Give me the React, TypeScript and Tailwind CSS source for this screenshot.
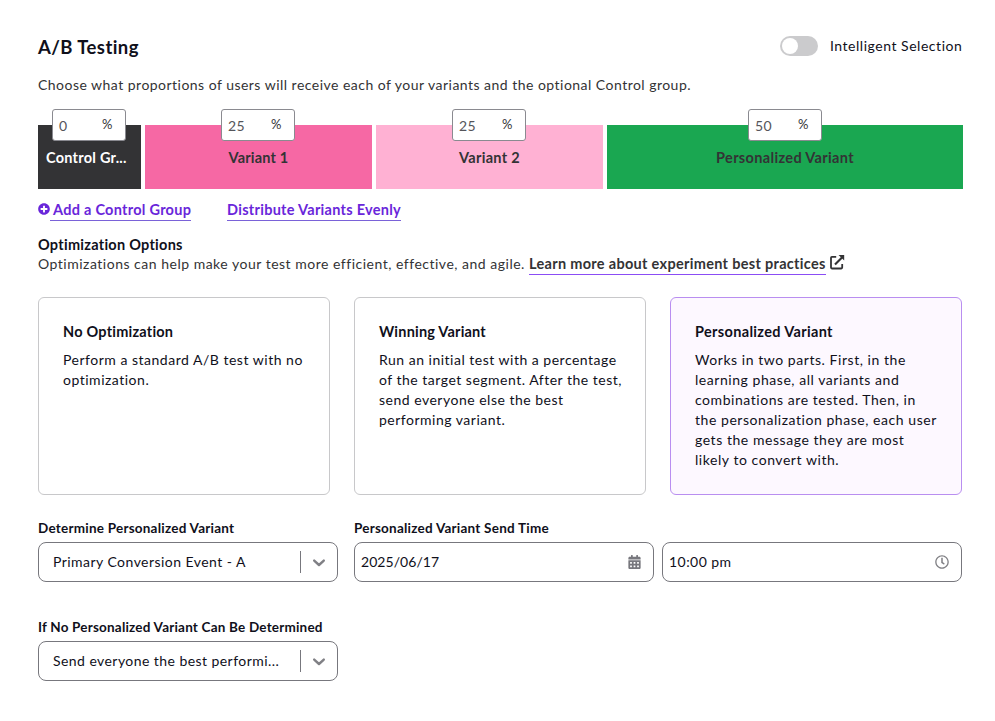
import type { ReactNode } from "react";
import { clsx } from "clsx";
import { FaCalendarAlt, FaPlusCircle, FaRegClock } from "react-icons/fa";

const segments = [
  { name: "Control Gr...", value: "0", size: "w-[103px]", fill: "bg-[#333335]", text: "text-white", align: "pl-2 text-left", track: "tracking-[0.25px]", nudge: "mr-px" },
  { name: "Variant 1", value: "25", size: "w-[227px]", fill: "bg-[#f668a4]", text: "text-[#333335]", align: "text-center", track: "tracking-[0.2px]", nudge: "mr-px" },
  { name: "Variant 2", value: "25", size: "w-[227px]", fill: "bg-[#ffb1d3]", text: "text-[#333335]", align: "text-center", track: "tracking-[0.3px]", nudge: "mr-px" },
  { name: "Personalized Variant", value: "50", size: "w-[356px]", fill: "bg-[#1aa751]", text: "text-[#333335]", align: "text-center", track: "tracking-[0.34px]" },
];

const options = [
  { title: "No Optimization", lines: ["Perform a standard A/B test with no", "optimization."], track: "tracking-[0.22px]", body: "tracking-[0.51px]" },
  {
    title: "Winning Variant",
    lines: ["Run an initial test with a percentage", "of the target segment. After the test,", "send everyone else the best", "performing variant."],
    track: "tracking-[0.2px]",
    body: "tracking-[0.5px]",
  },
  {
    title: "Personalized Variant",
    lines: [
      "Works in two parts. First, in the",
      "learning phase, all variants and",
      "combinations are tested. Then, in",
      "the personalization phase, each user",
      "gets the message they are most",
      "likely to convert with.",
    ],
    track: "tracking-[0.34px]",
    body: "tracking-[0.55px]",
    selected: true,
  },
];

function FieldLabel({ children, className }: { children: ReactNode; className?: string }) {
  return <div className={clsx("h-5 whitespace-nowrap text-[13.5px] leading-5 font-bold text-[#10101b]", className)}>{children}</div>;
}

function Select({ value, className }: { value: string; className?: string }) {
  return (
    <div className="flex h-10 w-[300px] items-center rounded-lg border border-[#77777d] bg-white">
      <span className={clsx("flex-1 whitespace-nowrap pl-[14px] leading-5 text-[#10101b]", className)}>{value}</span>
      <span className="h-[22px] w-px bg-[#77777d]" />
      <span className="flex w-9 justify-center">
        <svg width="14" height="10" viewBox="0 0 14 10" fill="none" className="mt-px">
          <path d="M2.2 2.6 7 7l4.8-4.4" stroke="#808085" strokeWidth="2.4" strokeLinecap="round" strokeLinejoin="round" />
        </svg>
      </span>
    </div>
  );
}

function ExternalIcon() {
  return (
    <svg width="15" height="15" viewBox="0 0 15 15" fill="none" className="mt-px ml-1">
      <path d="M6.2 1.9H1.9a.9.9 0 0 0-.9.9v9.8c0 .5.4.9.9.9h9.4c.5 0 .9-.4.9-.9V9" stroke="#333335" strokeWidth="1.8" />
      <path d="M5 9.6 12 2.6" stroke="#333335" strokeWidth="2.1" />
      <path d="M8.5 0H14.2v5.6z" fill="#333335" />
    </svg>
  );
}

export default function App() {
  return (
    <main className="h-[721px] w-[995px] bg-white pt-[36px] pr-8 pl-[38px] font-['Lato','Open_Sans',sans-serif] text-[14px] leading-5 tracking-[0.48px] text-[#333335]">
      <header className="flex h-[22px] items-center justify-between pr-px">
        <h1 className="text-[18.5px] leading-[22px] font-bold tracking-[0.42px] text-[#10101b]">A/B Testing</h1>
        <div className="-mt-[2px] flex items-center">
          <span className="flex h-5 w-[38px] items-center rounded-full bg-[#cbcbcd] pl-[2px]">
            <span className="size-4 rounded-full bg-white" />
          </span>
          <span className="ml-[12px] w-[132px] whitespace-nowrap tracking-[0.53px] text-[#10101b]">Intelligent Selection</span>
        </div>
      </header>

      <p className="mt-[17px] h-5 whitespace-nowrap tracking-[0.475px]">
        Choose what proportions of users will receive each of your variants and the optional Control group.
      </p>

      <section className="mt-[30px] flex gap-1">
        {segments.map((s) => (
          <div key={s.name} className={clsx("flex h-16 shrink-0 flex-col items-center", s.size, s.fill)}>
            <div className={clsx("-mt-4 flex h-8 w-[74px] shrink-0 items-center rounded-[3px] border border-[#8a8a90] bg-white pl-[6px] text-[#55555a]", s.nudge)}>
              <span className="w-[43px] pt-px">{s.value}</span>
              <span className="-mt-[2px] text-[13px] tracking-normal text-[#333335]">%</span>
            </div>
            <div className={clsx("mt-[7px] w-full whitespace-nowrap text-[14.5px] leading-5 font-bold", s.text, s.align, s.track)}>{s.name}</div>
          </div>
        ))}
      </section>

      <div className="mt-[11px] flex h-[21px] text-[14.5px] leading-5 font-bold text-[#6926da]">
        <span className="flex">
          <FaPlusCircle className="mt-[3px] size-3" />
          <a className="h-[21px] w-[141px] border-b border-[#7a62d8] pl-[3px] whitespace-nowrap tracking-[0.27px]">Add a Control Group</a>
        </span>
        <a className="ml-[36px] h-[21px] w-[174px] border-b border-[#7a62d8] whitespace-nowrap tracking-[0.28px]">Distribute Variants Evenly</a>
      </div>

      <h2 className="mt-[14px] h-[19px] text-[14.5px] leading-5 font-bold tracking-[0.27px] text-[#10101b]">Optimization Options</h2>
      <p className="flex h-5 whitespace-nowrap">
        <span className="w-[491px] tracking-[0.505px]">Optimizations can help make your test more efficient, effective, and agile.</span>
        <a className="h-[21px] w-[297px] border-b border-[#8b4df5] text-[14.5px] leading-5 font-bold tracking-[0.31px]">Learn more about experiment best practices</a>
        <ExternalIcon />
      </p>

      <section className="mt-[23px] flex gap-6">
        {options.map((o) => (
          <article
            key={o.title}
            className={clsx("h-[198px] w-[292px] rounded-md border px-6 pt-6 text-[#10101b]", o.selected ? "border-[#b98ef0] bg-[#fdf8ff]" : "border-[#c8c8ca]")}
          >
            <h3 className={clsx("text-[14.5px] leading-5 font-bold", o.track)}>{o.title}</h3>
            <p className={clsx("mt-2", o.body)}>
              {o.lines.map((line) => (
                <span key={line} className="block whitespace-nowrap">{line}</span>
              ))}
            </p>
          </article>
        ))}
      </section>

      <section className="mt-[23px] flex">
        <div className="w-[316px]">
          <FieldLabel className="tracking-[0.23px]">Determine Personalized Variant</FieldLabel>
          <div className="mt-1">
            <Select value="Primary Conversion Event - A" className="tracking-[0.46px]" />
          </div>
        </div>
        <div>
          <FieldLabel className="tracking-[0.23px]">Personalized Variant Send Time</FieldLabel>
          <div className="mt-1 flex gap-2">
            <div className="flex h-10 w-[300px] items-center justify-between rounded-lg border border-[#77777d] pr-3 pl-[6px] text-[#10101b]">
              <span className="tracking-[0.05px]">2025/06/17</span>
              <FaCalendarAlt className="h-[14px] w-[13px] text-[#77777d]" />
            </div>
            <div className="flex h-10 w-[300px] items-center justify-between rounded-lg border border-[#77777d] pr-3 pl-[6px] text-[#10101b]">
              <span className="tracking-[0.45px]">10:00 pm</span>
              <FaRegClock className="size-[14px] text-[#808085]" />
            </div>
          </div>
        </div>
      </section>

      <section className="mt-[35px]">
        <FieldLabel className="tracking-[0.2px]">If No Personalized Variant Can Be Determined</FieldLabel>
        <div className="mt-1">
          <Select value="Send everyone the best performi..." className="tracking-[0.44px]" />
        </div>
      </section>
    </main>
  );
}
